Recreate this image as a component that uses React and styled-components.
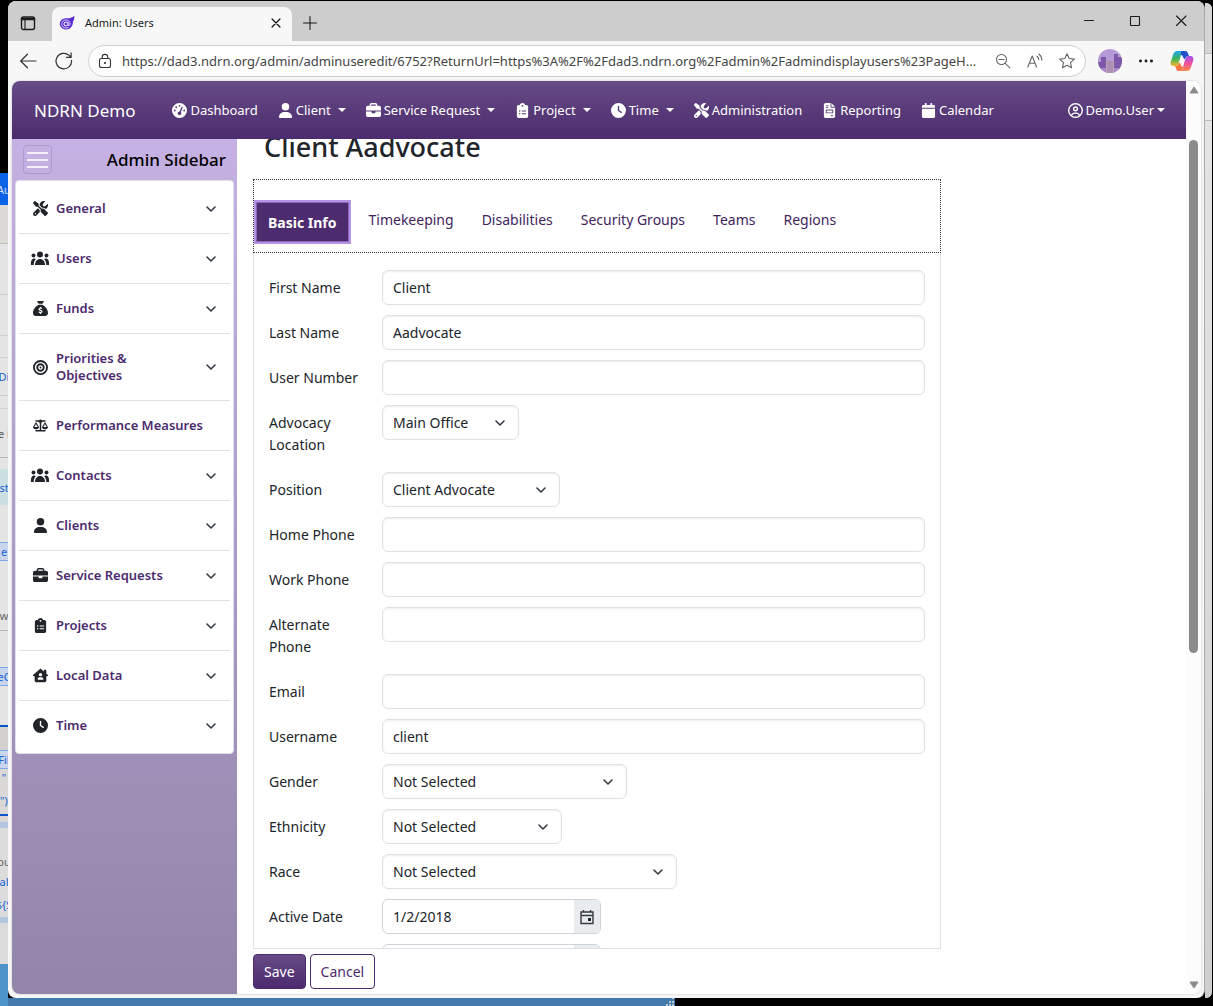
import { useState } from "react";
import styled, { createGlobalStyle, css } from "styled-components";
import {
  FaBriefcase,
  FaBullseye,
  FaCalendar,
  FaClipboardList,
  FaClock,
  FaFileInvoice,
  FaGaugeHigh,
  FaHouseChimneyUser,
  FaRegCircleUser,
  FaSackDollar,
  FaScaleBalanced,
  FaScrewdriverWrench,
  FaUser,
} from "react-icons/fa6";

const navLinks = [
  { label: "Dashboard", icon: FaGaugeHigh },
  { label: "Client", icon: FaUser, menu: true },
  { label: "Service Request", icon: FaBriefcase, menu: true },
  { label: "Project", icon: FaClipboardList, menu: true },
  { label: "Time", icon: FaClock, menu: true },
  { label: "Administration", icon: FaScrewdriverWrench },
  { label: "Reporting", icon: FaFileInvoice },
  { label: "Calendar", icon: FaCalendar },
];

const sidebarItems = [
  { label: "General", icon: FaScrewdriverWrench, open: true },
  { label: "Users", icon: PeopleIcon, open: true },
  { label: "Funds", icon: FaSackDollar, open: true },
  { label: "Priorities & Objectives", icon: FaBullseye, open: true },
  { label: "Performance Measures", icon: FaScaleBalanced },
  { label: "Contacts", icon: PeopleIcon, open: true },
  { label: "Clients", icon: FaUser, open: true },
  { label: "Service Requests", icon: FaBriefcase, open: true },
  { label: "Projects", icon: FaClipboardList, open: true },
  { label: "Local Data", icon: FaHouseChimneyUser, open: true },
  { label: "Time", icon: FaClock, open: true },
];

const tabs = [
  "Basic Info",
  "Timekeeping",
  "Disabilities",
  "Security Groups",
  "Teams",
  "Regions",
];

const fields = [
  { id: "firstName", label: "First Name", value: "Client" },
  { id: "lastName", label: "Last Name", value: "Aadvocate" },
  { id: "userNumber", label: "User Number", value: "" },
  { id: "location", label: "Advocacy Location", select: "Main Office", width: 137 },
  { id: "position", label: "Position", select: "Client Advocate", width: 178 },
  { id: "homePhone", label: "Home Phone", value: "" },
  { id: "workPhone", label: "Work Phone", value: "" },
  { id: "altPhone", label: "Alternate Phone", value: "" },
  { id: "email", label: "Email", value: "" },
  { id: "username", label: "Username", value: "client" },
  { id: "gender", label: "Gender", select: "Not Selected", width: 245 },
  { id: "ethnicity", label: "Ethnicity", select: "Not Selected", width: 180 },
  { id: "race", label: "Race", select: "Not Selected", width: 295 },
  { id: "activeDate", label: "Active Date", date: "1/2/2018" },
  { id: "inactiveDate", label: "", date: "" },
];

// strips of the window that lies behind the browser
const behindStrips = [
  { h: 173, bg: "#000" },
  { h: 32, bg: "#0a63e6", color: "#cfe0fb", text: "Au" },
  { h: 38, bg: "#dcdad7" },
  { h: 51, line: "#bfbfbf" },
  { h: 41, line: "#c9c9c9" },
  { h: 22, line: "#cfcfcf" },
  { h: 38, line: "#d2d2d2", color: "#1763d6", text: "Di" },
  { h: 13, line: "#cfcfcf" },
  { h: 49, line: "#d2d2d2", color: "#555", text: "e i" },
  { h: 12, line: "#b9b9b9" },
  { h: 36, bg: "#cbe0e3", color: "#1763d6", text: "st" },
  { h: 37 },
  { h: 18, bg: "#c9d5ea", line: "#7fa6e6", color: "#1763d6", text: "e" },
  { h: 40, line: "#7fa6e6" },
  { h: 30, color: "#666", text: "w" },
  { h: 37, line: "#b9b9b9" },
  { h: 18, bg: "#c9d5ea", line: "#7fa6e6", color: "#1763d6", text: "eC" },
  { h: 40, line: "#7fa6e6" },
  { h: 2, bg: "#0a56c9" },
  { h: 23, bg: "#d3d1cf" },
  { h: 18, bg: "#c9d5ea", line: "#7fa6e6", color: "#1763d6", text: "Fil" },
  { h: 18, bg: "#d9d8d7", line: "#7fa6e6", color: "#1763d6", text: '"' },
  { h: 28, bg: "#d9d8d7", color: "#1763d6", text: '")' },
  { h: 2, bg: "#0a56c9" },
  { h: 6, bg: "#d9d8d7" },
  { h: 6, bg: "#b4c5e0" },
  { h: 23, bg: "#dcdcdc" },
  { h: 20, bg: "#dcdcdc", color: "#666", text: "ou" },
  { h: 20, bg: "#dcdcdc", color: "#1763d6", text: "al" },
  { h: 26, bg: "#dcdcdc", color: "#1763d6", text: "${S" },
  { h: 6, bg: "#b4c5e0" },
  { h: 41, bg: "#dcdcdc" },
];

function PeopleIcon() {
  return (
    <svg width="20" height="15" viewBox="0 0 20 15" fill="currentColor">
      <circle cx="10" cy="3.500" r="3" />
      <circle cx="3.500" cy="4.500" r="2" />
      <circle cx="16.500" cy="4.500" r="2" />
      <path d="M5 14c0-3.600 2-6 5-6s5 2.400 5 6z" />
      <path d="M1 14c-.4-4 .8-6.500 3.200-6.500.6 0 1.200.2 1.700.5C4.400 9.600 3.700 11.500 3.700 14z" />
      <path d="M19 14c.4-4-.8-6.500-3.200-6.500-.6 0-1.200.2-1.700.5 1.500 1.600 2.200 3.500 2.200 6z" />
    </svg>
  );
}

function Chevron() {
  return (
    <svg width="12" height="12" viewBox="0 0 12 12" fill="none">
      <path
        d="m2 4 4 4 4-4"
        stroke="#343a40"
        strokeWidth="1.600"
        strokeLinecap="round"
        strokeLinejoin="round"
      />
    </svg>
  );
}

function BrowserIcon({ children, size = 16, color = "#1b1b1b" }) {
  return (
    <svg
      width={size}
      height={size}
      viewBox="0 0 16 16"
      fill="none"
      stroke={color}
      strokeWidth="1.100"
      strokeLinecap="round"
      strokeLinejoin="round"
    >
      {children}
    </svg>
  );
}

function TitleBar() {
  return (
    <StyledTitleBar>
      <StyledTabActions aria-label="Tab actions">
        <BrowserIcon>
          <rect x="1.500" y="2" width="13" height="12.500" rx="2" strokeWidth="1.400" />
          <path d="M2 4h12" strokeWidth="2.600" />
          <path d="M5 5v9" />
        </BrowserIcon>
      </StyledTabActions>
      <StyledBrowserTab>
        <svg width="16" height="16" viewBox="0 0 16 16" fill="none">
          <path
            d="M8 3.200C10 3.500 12.500 2.800 15.300 1c.2 2.500-.3 4.300-1.300 5.600 0 4.800-3 8-6.700 8C3.600 14.600.8 12 .8 8.800.8 5.600 3.600 3.100 8 3.200z"
            fill="#5a2bd0"
          />
          <circle cx="7" cy="9" r="2" stroke="#fff" strokeWidth="1" />
          <path
            d="M9.100 7v3.200c.3 1 2 .8 2-1.200 0-2.500-1.800-4-4.100-4-2.400 0-4.200 1.700-4.200 4s1.800 4 4.200 4c1 0 1.800-.2 2.500-.6"
            stroke="#e4dafc"
            strokeWidth=".9"
          />
        </svg>
        <span>Admin: Users</span>
        <StyledTabClose aria-label="Close tab">
          <BrowserIcon size={14}>
            <path d="m3.500 3.500 9 9m0-9-9 9" strokeWidth="1.500" />
          </BrowserIcon>
        </StyledTabClose>
      </StyledBrowserTab>
      <StyledNewTab aria-label="New tab">
        <BrowserIcon>
          <path d="M8 1.500v13M1.500 8h13" />
        </BrowserIcon>
      </StyledNewTab>
      <StyledWindowButtons>
        <button aria-label="Minimize">
          <BrowserIcon>
            <path d="M3.500 7.500h9" />
          </BrowserIcon>
        </button>
        <button aria-label="Maximize">
          <BrowserIcon>
            <rect x="3.500" y="3.500" width="9" height="9" rx=".5" />
          </BrowserIcon>
        </button>
        <button aria-label="Close">
          <BrowserIcon>
            <path d="m3.500 3 9.500 9.500m0-9.500-9.500 9.500" />
          </BrowserIcon>
        </button>
      </StyledWindowButtons>
    </StyledTitleBar>
  );
}

function Toolbar() {
  return (
    <StyledToolbar>
      <StyledToolButton aria-label="Back">
        <BrowserIcon size={18} color="#333">
          <path d="M15 8H1.500M7.500 2l-6 6 6 6" />
        </BrowserIcon>
      </StyledToolButton>
      <StyledToolButton aria-label="Refresh">
        <BrowserIcon size={18} color="#333">
          <path d="M14.700 7.500A6.900 6.900 0 1 1 12.500 3L14 4.500M14.300.8v4h-4" />
        </BrowserIcon>
      </StyledToolButton>
      <StyledAddressBar>
        <BrowserIcon color="#333">
          <rect x="2.500" y="5.500" width="11" height="9" rx="2" />
          <path d="M5.200 5.500V4.200a2.800 2.800 0 0 1 5.600 0v1.300" />
          <circle cx="8" cy="10" r=".5" fill="#333" />
        </BrowserIcon>
        <StyledUrl
          aria-label="Address"
          readOnly
          value="https://dad3.ndrn.org/admin/adminuseredit/6752?ReturnUrl=https%3A%2F%2Fdad3.ndrn.org%2Fadmin%2Fadmindisplayusers%23PageH..."
        />
        <StyledAddressIcons>
          <button aria-label="Zoom out">
            <BrowserIcon color="#666">
              <circle cx="6.500" cy="6.500" r="5" />
              <path d="m10.300 10.300 4.500 4.500M4 6.500h5" />
            </BrowserIcon>
          </button>
          <button aria-label="Read aloud">
            <BrowserIcon color="#666">
              <path d="M.8 14 5.200 3l4.400 11M2.300 10.300h5.800M10 3.200c1.200.9 1.800 2 1.800 3.600M11.800 1c2 1.400 3 3.400 3 6" />
            </BrowserIcon>
          </button>
          <button aria-label="Add to favorites">
            <BrowserIcon color="#666">
              <path d="m8 .8 2.200 4.700 5.100.6-3.800 3.500 1 5.100L8 12.200l-4.500 2.500 1-5.100L.7 6.100l5.100-.6z" />
            </BrowserIcon>
          </button>
        </StyledAddressIcons>
      </StyledAddressBar>
      <StyledProfile aria-label="Profile">
        <svg width="24" height="24" viewBox="0 0 24 24">
          <clipPath id="avatar">
            <circle cx="12" cy="12" r="12" />
          </clipPath>
          <g clipPath="url(#avatar)">
            <path fill="#b59ad6" d="M0 0h24v24H0z" />
            <path fill="#7d57a8" d="M3 8h5v5h8V5h4v3h4v12h-8v-4H8v4H0v-7h3z" />
            <path fill="#a988c9" d="M0 19h24v5H0z" />
            <path fill="#c2a6b8" d="M8 12h8v12H8z" />
            <path stroke="#8b66ac" d="M10 12v12m2-12v12m2-12v12" strokeWidth=".7" />
          </g>
        </svg>
      </StyledProfile>
      <StyledToolButton aria-label="Settings and more">
        <BrowserIcon>
          <g fill="#222">
            <circle cx="2.500" cy="8" r=".9" />
            <circle cx="8" cy="8" r=".9" />
            <circle cx="13.500" cy="8" r=".9" />
          </g>
        </BrowserIcon>
      </StyledToolButton>
      <StyledToolButton aria-label="Copilot">
        <svg width="24" height="24" viewBox="0 0 24 24">
          <defs>
            <linearGradient id="copilotLeft" x1="0" y1="0" x2="0" y2="1">
              <stop offset="0" stopColor="#1fa6f0" />
              <stop offset=".5" stopColor="#3bb45c" />
              <stop offset="1" stopColor="#f3b52c" />
            </linearGradient>
            <linearGradient id="copilotRight" x1="0" y1="0" x2="0" y2="1">
              <stop offset="0" stopColor="#a14bf0" />
              <stop offset=".5" stopColor="#f0509a" />
              <stop offset="1" stopColor="#fb8a4a" />
            </linearGradient>
          </defs>
          <path
            fill="url(#copilotLeft)"
            d="M7 2h8c-2 0-3 1-4 4l-2 7c-1 3-1.500 4-4 4H4c-3 0-4-2-3-5l2-6c1-3 2-4 4-4z"
          />
          <path
            fill="url(#copilotRight)"
            d="M17 22H9c2 0 3-1 4-4l2-7c1-3 1.500-4 4-4h1c3 0 4 2 3 5l-2 6c-1 3-2 4-4 4z"
          />
          <path fill="#2150c8" d="M11 2h4c2 0 2.500 1 3 2.500l1 2.500c-2.500 0-3.500 1-4 3h-1c-1-2-1.500-4-3-4z" />
          <path fill="#f5743f" d="M5 17c2.500 0 3.500-1 4-3h1c1 2 1.500 4 3 4-.8 2.800-1.600 4-3 4H9c-2 0-2.500-1-3-2.500z" />
        </svg>
      </StyledToolButton>
    </StyledToolbar>
  );
}

function Field({ field }) {
  return (
    <StyledRow>
      <StyledLabel htmlFor={field.id}>{field.label}</StyledLabel>
      {field.select && (
        <StyledSelectBox $width={field.width}>
          <select id={field.id} defaultValue={field.select}>
            <option>{field.select}</option>
          </select>
          <Chevron />
        </StyledSelectBox>
      )}
      {field.date !== undefined && (
        <StyledDateBox>
          <input
            id={field.id}
            type="text"
            defaultValue={field.date}
            aria-label={field.label || "Date"}
          />
          <button type="button" aria-label="Pick a date">
            <svg width="14" height="16" viewBox="0 0 14 16" fill="none">
              <path
                d="M1 3h12v11.500H1zM1 6.500h12M3.500 1v2M10.500 1v2"
                stroke="#343a40"
                strokeWidth="1.400"
              />
              <path d="M8 9h3v3H8z" fill="#212529" />
            </svg>
          </button>
        </StyledDateBox>
      )}
      {field.value !== undefined && (
        <StyledInput id={field.id} type="text" defaultValue={field.value} />
      )}
    </StyledRow>
  );
}

export default function App() {
  const [activeTab, setActiveTab] = useState("Basic Info");

  return (
    <StyledDesktop>
      <GlobalStyle />
      <StyledBehindLeft aria-hidden="true">
        {behindStrips.map((strip, index) => (
          <StyledStrip
            key={index}
            $height={strip.h}
            $bg={strip.bg}
            $line={strip.line}
            $color={strip.color}
          >
            {strip.text}
          </StyledStrip>
        ))}
      </StyledBehindLeft>

      <StyledWindow>
        <TitleBar />
        <Toolbar />
        <StyledPage>
          <StyledSite>
            <StyledNavbar>
              <StyledBrand href="#">NDRN Demo</StyledBrand>
              {navLinks.map(({ label, icon: Icon, menu }) => (
                <StyledNavLink href="#" key={label}>
                  <Icon />
                  {label}
                  {menu && <StyledCaret $spaced />}
                </StyledNavLink>
              ))}
              <StyledUserLink href="#">
                <FaRegCircleUser />
                Demo.User
                <StyledCaret />
              </StyledUserLink>
            </StyledNavbar>

            <StyledBody>
              <StyledSidebar>
                <StyledSidebarHeader>
                  <StyledToggler aria-label="Toggle sidebar">
                    <span />
                    <span />
                    <span />
                  </StyledToggler>
                  <h2>Admin Sidebar</h2>
                </StyledSidebarHeader>
                <StyledMenu>
                  {sidebarItems.map(({ label, icon: Icon, open }) => (
                    <StyledMenuItem key={label}>
                      <a href="#">
                        <StyledMenuIcon>
                          <Icon />
                        </StyledMenuIcon>
                        <StyledMenuText $open={open}>{label}</StyledMenuText>
                        {open && <Chevron />}
                      </a>
                    </StyledMenuItem>
                  ))}
                </StyledMenu>
              </StyledSidebar>

              <StyledMain>
                <StyledHeading>
                  <h1>Client Aadvocate</h1>
                </StyledHeading>
                <StyledPanel>
                  <StyledTabs role="tablist">
                    {tabs.map(tab => (
                      <StyledTab
                        key={tab}
                        type="button"
                        role="tab"
                        aria-selected={tab === activeTab}
                        $active={tab === activeTab}
                        onClick={() => setActiveTab(tab)}
                      >
                        {tab}
                      </StyledTab>
                    ))}
                  </StyledTabs>
                  <StyledForm>
                    {fields.map(field => (
                      <Field key={field.id} field={field} />
                    ))}
                  </StyledForm>
                </StyledPanel>
                <StyledActions>
                  <StyledButton type="button" $primary>
                    Save
                  </StyledButton>
                  <StyledButton type="button">Cancel</StyledButton>
                </StyledActions>
              </StyledMain>
            </StyledBody>
          </StyledSite>
          <StyledScrollbar aria-hidden="true">
            <svg width="10" height="8" viewBox="0 0 10 8">
              <path d="M5 1 9 7H1z" fill="#8b8b8b" stroke="#8b8b8b" strokeLinejoin="round" />
            </svg>
            <StyledScrollTrack>
              <StyledThumb />
            </StyledScrollTrack>
            <svg width="10" height="8" viewBox="0 0 10 8">
              <path d="M5 7 1 1h8z" fill="#8b8b8b" stroke="#8b8b8b" strokeLinejoin="round" />
            </svg>
          </StyledScrollbar>
        </StyledPage>
      </StyledWindow>

      <StyledBehindRight aria-hidden="true">
        <span />
        <span />
        <span />
      </StyledBehindRight>

      <StyledTaskEdge aria-hidden="true">
        <svg width="9" height="8" viewBox="0 0 9 8" fill="#b9c4cc">
          <path d="M6 0h2v1H6zM3 3h2v2H3zM6 3h2v2H6zM0 6h2v2H0zM3 6h2v2H3zM6 6h2v2H6z" />
        </svg>
      </StyledTaskEdge>
    </StyledDesktop>
  );
}

const GlobalStyle = createGlobalStyle`
  * {
    box-sizing: border-box;
  }

  body {
    margin: 0;
    background-color: #000;
    color: #212529;
    font-family: "Noto Sans", "Open Sans", sans-serif;
    font-size: 14px;
  }

  button,
  input,
  select {
    font-family: inherit;
    font-size: inherit;
    color: inherit;
  }

  button {
    display: flex;
    align-items: center;
    justify-content: center;
    padding: 0;
    border: none;
    background: none;
  }

  a {
    text-decoration: none;
  }

  svg {
    flex-shrink: 0;
  }
`;

const StyledDesktop = styled.div`
  display: grid;
  grid-template-columns: 8px minmax(0, 1fr) 8px;
  grid-template-rows: minmax(0, 1fr) 8px;
  height: 100vh;
  overflow: hidden;
`;

const StyledBehindLeft = styled.div`
  grid-row: 1 / 3;
  overflow: hidden;
  background-color: #4b93c8;
`;

const StyledStrip = styled.div`
  display: flex;
  align-items: center;
  justify-content: center;
  height: ${({ $height }) => $height}px;
  overflow: hidden;
  white-space: nowrap;
  font-size: 11px;
  color: ${({ $color }) => $color};
  background-color: ${({ $bg }) => $bg || "#e4e4e4"};
  border-top: ${({ $line }) => ($line ? `1px solid ${$line}` : "none")};
`;

const StyledBehindRight = styled.div`
  display: flex;
  flex-direction: column;
  margin: 3px 1px 0 0;
  border-radius: 0 6px 6px 0;
  overflow: hidden;
  background-color: #dadada;

  span {
    height: 67px;
    border-bottom: 1px solid #bdbdbd;
    background-color: #ececec;
  }

  span:first-child {
    height: 51px;
    background-color: #d6d6d6;
  }

  span:last-child {
    flex: 1;
    border: none;
    background: linear-gradient(#e4e4e4, #cfcfcf);
  }
`;

const StyledTaskEdge = styled.div`
  grid-column: 2 / 4;
  display: flex;
  justify-content: flex-end;
  width: 667px;
  background-color: #427bab;
`;

const StyledWindow = styled.div`
  display: flex;
  flex-direction: column;
  margin-top: 1px;
  padding-bottom: 4px;
  border-right: 1px solid #a9a9a9;
  border-radius: 8px;
  overflow: hidden;
  background-color: #f7f7f7;
`;

const StyledTitleBar = styled.div`
  display: flex;
  flex: none;
  height: 40px;
  background-color: #cdcdcd;
`;

const StyledTabActions = styled.button`
  width: 44px;
  padding: 4px 4px 0 0;
`;

const StyledBrowserTab = styled.div`
  display: flex;
  align-items: center;
  gap: 10px;
  width: 240px;
  margin-top: 6px;
  padding: 0 9px 3px 7px;
  border-radius: 8px 8px 0 0;
  font-size: 11px;
  color: #1b1b1b;
  background-color: #f7f7f7;
`;

const StyledTabClose = styled.button`
  margin-left: auto;
`;

const StyledNewTab = styled.button`
  width: 35px;
  padding-top: 4px;
`;

const StyledWindowButtons = styled.div`
  display: flex;
  margin-left: auto;

  button {
    width: 46px;
  }
`;

const StyledToolbar = styled.div`
  display: flex;
  flex: none;
  align-items: center;
  height: 40px;
  padding: 0 4px 0 2px;
`;

const StyledToolButton = styled.button`
  width: 36px;
  height: 36px;
`;

const StyledAddressBar = styled.div`
  display: flex;
  flex: 1;
  align-items: center;
  gap: 9px;
  height: 32px;
  margin-left: 6px;
  padding: 0 10px 0 8px;
  border: 1px solid #cfcfcf;
  border-radius: 16px;
  background-color: #fff;
`;

const StyledUrl = styled.input`
  flex: 1;
  min-width: 0;
  padding: 0;
  border: none;
  outline: none;
  font-size: 13px;
  color: #444;
  background: none;
`;

const StyledAddressIcons = styled.div`
  display: flex;
  gap: 16px;
`;

const StyledProfile = styled.button`
  margin: 0 6px 0 12px;
`;

const StyledPage = styled.div`
  display: flex;
  flex: 1;
  min-height: 0;
  margin: 0 3px 0 4px;
  border-radius: 8px;
  overflow: hidden;
  background-color: #fff;
  box-shadow: 0 0 2px rgba(0, 0, 0, 0.25);
`;

const StyledSite = styled.div`
  display: flex;
  flex: 1;
  flex-direction: column;
  min-width: 0;
`;

const StyledNavbar = styled.nav`
  display: flex;
  flex: none;
  align-items: center;
  height: 58px;
  padding: 0 11px 0 22px;
  font-size: 13px;
  background: linear-gradient(#664b85, #4c2b6e);
`;

const StyledBrand = styled.a`
  margin-right: 27px;
  font-size: 17px;
  color: #fff;
`;

const StyledNavLink = styled.a`
  display: flex;
  align-items: center;
  gap: 3px;
  padding: 0 10px;
  white-space: nowrap;
  color: #fff;

  svg {
    width: auto;
    height: 15px;
  }
`;

const StyledUserLink = styled(StyledNavLink)`
  margin-left: auto;
`;

const StyledCaret = styled.span`
  margin-left: ${({ $spaced }) => ($spaced ? "4px" : "0")};
  border-top: 4px solid #fff;
  border-right: 4px solid transparent;
  border-left: 4px solid transparent;
`;

const StyledBody = styled.div`
  display: flex;
  flex: 1;
  min-height: 0;
`;

const StyledSidebar = styled.aside`
  flex: none;
  width: 225px;
  padding: 0 3px;
  background: linear-gradient(#c5b1e3, #9384a9);
`;

const StyledSidebarHeader = styled.div`
  display: flex;
  align-items: center;
  justify-content: space-between;
  height: 41px;
  padding: 0 8px;

  h2 {
    margin: 0;
    font-size: 17px;
    font-weight: 500;
    color: #000;
  }
`;

const StyledToggler = styled.button`
  flex-direction: column;
  gap: 5px;
  width: 29px;
  height: 29px;
  border: 1px solid #ae9bca;
  border-radius: 4px;

  span {
    width: 21px;
    height: 2px;
    background-color: #f3eefa;
  }
`;

const StyledMenu = styled.ul`
  margin: 0;
  padding: 3px;
  border: 1px solid #dee2e6;
  border-radius: 4px;
  list-style: none;
  background-color: #fff;
`;

const StyledMenuItem = styled.li`
  border-bottom: 1px solid #dee2e6;

  &:last-child {
    border-bottom: none;
  }

  a {
    display: flex;
    align-items: center;
    min-height: 49px;
    padding: 16px 13px 16px 11px;
    color: #4c2b6e;
  }

  svg {
    color: #212529;
  }
`;

const StyledMenuIcon = styled.span`
  display: flex;
  justify-content: center;
  width: 20px;
  margin-right: 6px;

  svg {
    width: auto;
    height: 15px;
  }
`;

const StyledMenuText = styled.span`
  flex: 1;
  padding-right: ${({ $open }) => ($open ? "20px" : "0")};
  font-size: 13px;
  font-weight: 600;
  line-height: 17px;
`;

const StyledMain = styled.main`
  display: flex;
  flex: 1;
  flex-direction: column;
  min-width: 0;
  padding: 0 16px;
`;

// the heading is partly scrolled under the navbar
const StyledHeading = styled.div`
  display: flex;
  flex: none;
  align-items: flex-end;
  height: 40px;
  padding: 0 11px 15px;
  overflow: hidden;

  h1 {
    margin: 0;
    font-size: 27px;
    font-weight: 500;
    line-height: 34px;
  }
`;

const StyledPanel = styled.section`
  display: flex;
  flex: 1;
  flex-direction: column;
  width: 75%;
  min-height: 0;
`;

const StyledTabs = styled.div`
  display: flex;
  flex: none;
  align-items: center;
  height: 74px;
  padding-top: 12px;
  border: 1px dotted #343a40;
`;

const StyledTab = styled.button`
  height: 40px;
  margin-bottom: 6px;
  padding: 0 14px;
  white-space: nowrap;
  color: #3f2460;

  ${({ $active }) =>
    $active &&
    css`
      margin: 0 6px 0 2px;
      padding: 0 11px;
      border: 1px solid #8866b8;
      font-weight: 700;
      color: #fff;
      background-color: #4c2b6e;
      box-shadow: 0 0 0 2px #b793e8;
    `}
`;

const StyledForm = styled.form`
  flex: 1;
  min-height: 0;
  padding: 17px 15px 0 15px;
  overflow: hidden;
  border: 1px solid #dee2e6;
  border-top: none;
`;

const StyledRow = styled.div`
  display: grid;
  grid-template-columns: 113px minmax(0, 1fr);
  align-items: start;
  margin-bottom: 10px;
`;

const StyledLabel = styled.label`
  padding: 7px 20px 6px 0;
  line-height: 22px;
`;

const control = css`
  width: 100%;
  height: 35px;
  padding: 0 10px;
  border: 1px solid #dee2e6;
  border-radius: 6px;
  outline: none;
  background-color: #fff;
  box-shadow: inset 0 1px 2px rgba(0, 0, 0, 0.08);
`;

const StyledInput = styled.input`
  ${control}
`;

const StyledSelectBox = styled.div`
  display: grid;
  align-items: center;
  width: ${({ $width }) => $width}px;

  select {
    ${control}
    grid-area: 1 / 1;
    appearance: none;
  }

  svg {
    grid-area: 1 / 1;
    justify-self: end;
    margin-right: 13px;
    pointer-events: none;
  }
`;

const StyledDateBox = styled.div`
  display: flex;
  width: 219px;
  height: 35px;
  border: 1px solid #ced4da;
  border-radius: 6px;
  overflow: hidden;
  background-color: #fff;

  input {
    flex: 1;
    min-width: 0;
    padding: 0 10px;
    border: none;
    outline: none;
    background: none;
  }

  button {
    width: 26px;
    background-color: #e9ecef;
  }
`;

const StyledActions = styled.div`
  display: flex;
  flex: none;
  gap: 4px;
  padding: 5px 0;
`;

const StyledButton = styled.button`
  height: 35px;
  padding: 0 10px;
  border: 1px solid #4c2b6e;
  border-radius: 4px;
  color: ${({ $primary }) => ($primary ? "#fff" : "#4c2b6e")};
  background: ${({ $primary }) =>
    $primary ? "linear-gradient(#664b85, #4c2b6e)" : "#fff"};
`;

const StyledScrollbar = styled.div`
  display: flex;
  flex-direction: column;
  align-items: center;
  width: 15px;
  padding: 5px 0;
  background-color: #fcfcfc;
`;

const StyledScrollTrack = styled.div`
  flex: 1;
  padding-top: 46px;
`;

const StyledThumb = styled.div`
  width: 9px;
  height: 61%;
  border-radius: 5px;
  background-color: #8b8b8b;
`;
